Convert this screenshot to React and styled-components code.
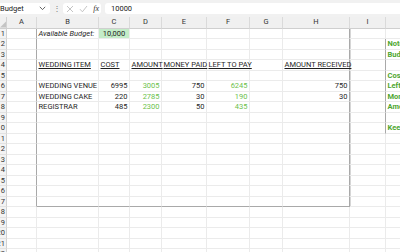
import React from 'react'
import styled, { createGlobalStyle } from 'styled-components'

const GlobalStyle = createGlobalStyle`
  html, body {
    margin: 0;
    padding: 0;
    overflow: hidden;
    background: #ffffff;
  }
  body {
    font-family: Roboto, "Liberation Sans", Arial, sans-serif;
    width: 400px;
    height: 252px;
  }
`

const COLS = [
  { key: 'A', w: 30 },
  { key: 'B', w: 62 },
  { key: 'C', w: 31 },
  { key: 'D', w: 32 },
  { key: 'E', w: 45 },
  { key: 'F', w: 43 },
  { key: 'G', w: 33 },
  { key: 'H', w: 67 },
  { key: 'I', w: 36 },
  { key: 'J', w: 60 },
]

const GREEN = '#6cbf4c'
const NOTE = '#4ea62f'

// cell contents by row
const DATA = {
  1: {
    B: { text: 'Available Budget:', italic: true },
    C: { text: '10,000', fill: '#c4ecc8', align: 'center' },
  },
  2: { J: { text: 'Notes:', color: NOTE, bold: true } },
  3: { J: { text: 'Budget total', color: NOTE, bold: true } },
  4: {
    B: { text: 'WEDDING ITEM', underline: true },
    C: { text: 'COST', underline: true },
    D: { text: 'AMOUNT', underline: true },
    E: { text: 'MONEY PAID', underline: true },
    F: { text: 'LEFT TO PAY', underline: true },
    H: { text: 'AMOUNT RECEIVED', underline: true },
  },
  5: { J: { text: 'Cost of item', color: NOTE, bold: true } },
  6: {
    B: { text: 'WEDDING VENUE' },
    C: { text: '6995', align: 'right' },
    D: { text: '3005', align: 'right', color: GREEN },
    E: { text: '750', align: 'right' },
    F: { text: '6245', align: 'right', color: GREEN },
    H: { text: '750', align: 'right' },
    J: { text: 'Left to pay', color: NOTE, bold: true },
  },
  7: {
    B: { text: 'WEDDING CAKE' },
    C: { text: '220', align: 'right' },
    D: { text: '2785', align: 'right', color: GREEN },
    E: { text: '30', align: 'right' },
    F: { text: '190', align: 'right', color: GREEN },
    H: { text: '30', align: 'right' },
    J: { text: 'Money paid', color: NOTE, bold: true },
  },
  8: {
    B: { text: 'REGISTRAR' },
    C: { text: '485', align: 'right' },
    D: { text: '2300', align: 'right', color: GREEN },
    E: { text: '50', align: 'right' },
    F: { text: '435', align: 'right', color: GREEN },
    J: { text: 'Amount left', color: NOTE, bold: true },
  },
  10: { J: { text: 'Keep receipts', color: NOTE, bold: true } },
}

const ROWS = 22

function App() {
  return (
    <>
      <GlobalStyle />
      <Window>
        <FormulaBar>
          <NameBox>
            <span>Budget</span>
            <svg width="7" height="5" viewBox="0 0 7 5">
              <path d="M0.8 0.8 L3.5 3.6 L6.2 0.8" fill="none" stroke="#555" strokeWidth="0.9" />
            </svg>
          </NameBox>
          <Dots>⋮</Dots>
          <ActionBox>
            <svg width="8" height="8" viewBox="0 0 8 8">
              <path d="M1 1 L7 7 M7 1 L1 7" stroke="#bdbdbd" strokeWidth="0.9" />
            </svg>
            <svg width="9" height="8" viewBox="0 0 9 8">
              <path d="M1 4.2 L3.4 6.8 L8 1" fill="none" stroke="#bdbdbd" strokeWidth="0.9" />
            </svg>
            <Fx>fx</Fx>
          </ActionBox>
          <FormulaInput>10000</FormulaInput>
        </FormulaBar>

        <Sheet>
          <Corner>
            <svg width="7" height="8" viewBox="0 0 7 8">
              <path d="M7 1 L7 8 L0 8 Z" fill="#c4c4c4" />
            </svg>
          </Corner>
          {COLS.map(c => (
            <ColHeader key={c.key}>{c.key !== 'J' ? c.key : ''}</ColHeader>
          ))}

          {Array.from({ length: ROWS }, (_, i) => i + 1).map(r => (
            <React.Fragment key={r}>
              <RowHeader><span>{r}</span></RowHeader>
              {COLS.map((c, ci) => {
                const cell = (DATA[r] && DATA[r][c.key]) || {}
                const inBox = r >= 1 && r <= 17
                const darkRight =
                  (inBox && (c.key === 'A' || c.key === 'H')) ||
                  (r >= 2 && r <= 10 && c.key === 'I')
                const darkBottom = r === 17 && ci >= 1 && ci <= 7
                return (
                  <Cell
                    key={c.key}
                    $br={darkRight}
                    $bb={darkBottom}
                    $shadow={inBox && c.key === 'H'}
                    $fill={cell.fill}
                    $align={cell.align}
                    $color={cell.color}
                    $italic={cell.italic}
                    $bold={cell.bold}
                    $underline={cell.underline}
                  >
                    {cell.text}
                  </Cell>
                )
              })}
            </React.Fragment>
          ))}
        </Sheet>
      </Window>
    </>
  )
}

export default App

const Window = styled.div`
  width: 400px;
  height: 252px;
  overflow: hidden;
  display: flex;
  flex-direction: column;
`

const FormulaBar = styled.div`
  height: 17px;
  flex: none;
  background: #f1f1f1;
  display: flex;
  align-items: center;
  box-sizing: border-box;
  padding: 0 0 0 0;
`

const NameBox = styled.div`
  margin-left: -5px;
  width: 55px;
  height: 11px;
  background: #fff;
  border-radius: 3px;
  box-sizing: border-box;
  padding: 0 4px 0 5px;
  display: flex;
  align-items: center;
  justify-content: space-between;
  font-size: 7.5px;
  color: #222;
`

const Dots = styled.div`
  width: 13px;
  text-align: center;
  font-size: 8px;
  color: #777;
  line-height: 11px;
`

const ActionBox = styled.div`
  width: 38px;
  height: 11px;
  background: #fff;
  border-radius: 3px;
  display: flex;
  align-items: center;
  justify-content: space-between;
  box-sizing: border-box;
  padding: 0 2px 0 3px;
`

const Fx = styled.span`
  font-family: "Liberation Serif", "DejaVu Serif", serif;
  font-style: italic;
  font-size: 8px;
  color: #333;
`

const FormulaInput = styled.div`
  margin-left: 4px;
  flex: 1;
  height: 11px;
  background: #fff;
  border-radius: 3px 0 0 3px;
  box-sizing: border-box;
  padding-left: 6px;
  font-size: 7.5px;
  line-height: 11px;
  color: #222;
`

const Sheet = styled.div`
  display: grid;
  grid-template-columns: 7px ${COLS.map(c => c.w + 'px').join(' ')};
  grid-template-rows: 11.5px;
  grid-auto-rows: 10.5px;
  background: #fff;
`

const Corner = styled.div`
  background: #f0f0f0;
  border-right: 1px solid #d2d2d2;
  border-bottom: 1px solid #cfcfcf;
  box-sizing: border-box;
  display: flex;
  align-items: flex-end;
  overflow: hidden;
`

const ColHeader = styled.div`
  background: #f0f0f0;
  border-right: 1px solid #dadada;
  border-bottom: 1px solid #cfcfcf;
  box-sizing: border-box;
  font-size: 7.5px;
  color: #333;
  text-align: center;
  line-height: 10.5px;
`

const RowHeader = styled.div`
  background: #f3f3f3;
  border-right: 1px solid #d2d2d2;
  border-bottom: 1px solid #e2e2e2;
  box-sizing: border-box;
  display: flex;
  justify-content: flex-end;
  align-items: center;
  overflow: hidden;
  font-size: 7.5px;
  color: #333;
  padding-right: 1px;
  white-space: nowrap;
`

const Cell = styled.div`
  box-sizing: border-box;
  border-right: 1px solid ${p => (p.$br ? '#a9a9a9' : '#ebebeb')};
  border-bottom: 1px solid ${p => (p.$bb ? '#a9a9a9' : '#ebebeb')};
  background: ${p => p.$fill || 'transparent'};
  box-shadow: ${p => (p.$shadow ? '1px 0 0 #d6d6d6' : 'none')};
  padding: 0 1.5px;
  font-size: 7.5px;
  line-height: 10px;
  white-space: nowrap;
  text-align: ${p => p.$align || 'left'};
  color: ${p => p.$color || '#1f1f1f'};
  font-style: ${p => (p.$italic ? 'italic' : 'normal')};
  font-weight: ${p => (p.$bold ? 700 : 400)};
  text-decoration: ${p => (p.$underline ? 'underline' : 'none')};
  text-underline-offset: 1px;
`
